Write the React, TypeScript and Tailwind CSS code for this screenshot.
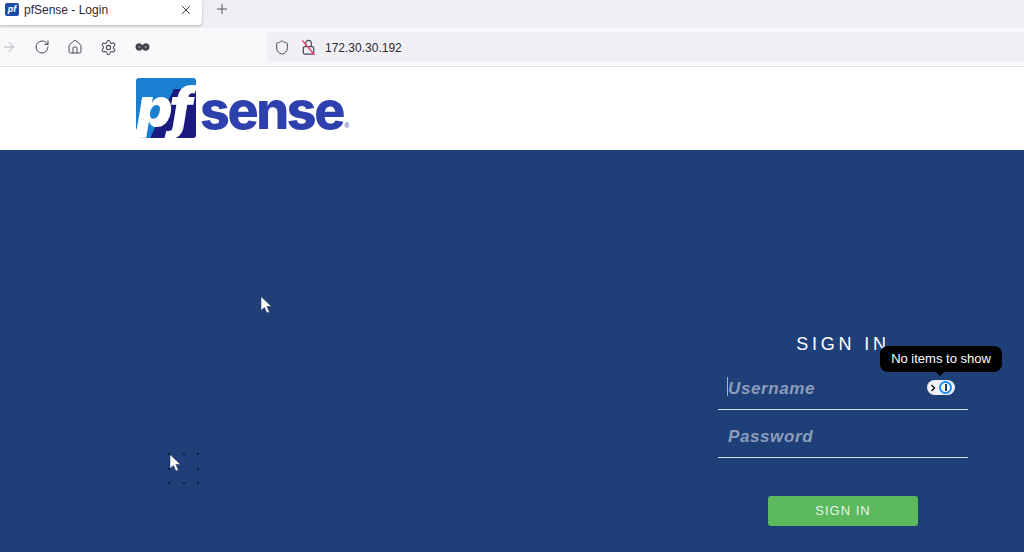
import React from 'react';
import { ArrowRight, RotateCw, Home, Settings, Shield, Plus, X } from 'lucide-react';

const ui = { fontFamily: '"Liberation Sans", sans-serif' };
const brand = { fontFamily: 'Inter, "Open Sans", sans-serif' };

const Cursor: React.FC<{ className: string }> = ({ className }) => (
  <svg viewBox="0 0 12 18" className={className}>
    <path d="M1 0.5V14.5L4.4 11.4L6.9 17L9.4 15.9L6.9 10.5H11.5Z" fill="#fff" stroke="#1a2b4d" strokeWidth="0.5" />
  </svg>
);

const BusyDots: React.FC = () => (
  <svg viewBox="0 0 34 34" className="absolute left-[167px] top-[452px] w-[34px] h-[34px]">
    {[2, 17, 31].flatMap((y) =>
      [2, 17, 31].map((x) =>
        x === 17 && y === 17 ? null : <circle key={`${x}-${y}`} cx={x} cy={y} r="1.1" fill="#0a1530" />
      )
    )}
  </svg>
);

const MaskIcon: React.FC = () => (
  <svg viewBox="0 0 16 10" className="w-[15px] h-[10px]">
    <path d="M4.5 1C6 1 7 2 8 3C9 2 10 1 11.5 1C13.8 1 15.5 2.8 15.5 5C15.5 7.2 13.8 9 11.5 9C10 9 9 8 8 7C7 8 6 9 4.5 9C2.2 9 0.5 7.2 0.5 5C0.5 2.8 2.2 1 4.5 1Z" fill="#44444f" />
    <circle cx="4.6" cy="5" r="1.2" fill="#8d8d96" />
    <circle cx="11.4" cy="5" r="1.2" fill="#8d8d96" />
  </svg>
);

const BrokenLock: React.FC = () => (
  <svg viewBox="0 0 16 18" fill="none" className="w-[15px] h-[17px]">
    <path d="M5 8V5C5 3 6.2 1.5 8 1.5C9.8 1.5 11 3 11 5V8" stroke="#4a4a55" strokeWidth="1.3" />
    <rect x="2.5" y="8" width="11" height="8" rx="1.5" stroke="#4a4a55" strokeWidth="1.3" />
    <path d="M1.5 1.5L14.5 17" stroke="#e8466e" strokeWidth="1.5" />
  </svg>
);

const Logo: React.FC = () => (
  <div className="flex items-start ml-[136px] mt-[11px] relative">
    <div className="relative w-[60px] h-[60px]">
      <svg viewBox="0 0 60 60" className="absolute inset-0 w-full h-full">
        <path d="M0 3Q0 0 3 0H57Q60 0 60 3V14H42L14 60H5L0 50Z" fill="#1a7fce" />
        <path d="M60 11V57Q60 60 57 60H14L38 11Z" fill="#1a1a80" />
      </svg>
      <span
        className="absolute left-[1px] top-[3px] text-[55px] leading-[52px] font-black italic text-white tracking-[-3px]"
        style={brand}
      >
        pf
      </span>
    </div>
    <span
      className="ml-[4px] mt-[7px] text-[52px] leading-[52px] font-extrabold text-[#2e3fae] tracking-[-2.4px]"
      style={brand}
    >
      sense
    </span>
    <span className="ml-[1px] mt-[44px] text-[7px] leading-[8px] text-[#2e3fae]" style={ui}>®</span>
  </div>
);

const Field: React.FC<{ label: string; caret?: boolean; children?: React.ReactNode }> = ({ label, caret, children }) => (
  <div className="relative h-[48px] border-b border-[#d5dbe6] flex items-center pl-[10px] pt-[7px]">
    {caret && <span className="absolute left-[9px] top-[15px] w-px h-[19px] bg-[#aab4c8]" />}
    <span className="text-[17px] font-bold italic tracking-[0.6px] text-[#8d9cbb]">{label}</span>
    {children}
  </div>
);

export default function App() {
  return (
    <div className="relative w-[1024px] h-[552px] overflow-hidden bg-white flex flex-col" style={ui}>
      {/* tab strip */}
      <div className="h-[28px] bg-[#f0f0f4] flex items-start shrink-0">
        <div className="w-[202px] h-[25px] bg-white rounded-br-[4px] shadow-[0_1px_3px_rgba(0,0,0,0.25)] flex items-center pl-[5px] pr-[9px] pb-[6px]">
          <span className="w-[14px] h-[13px] rounded-[2px] bg-[#1c4ca8] text-white text-[9px] leading-[13px] font-bold italic text-center">pf</span>
          <span className="ml-[5px] text-[12px] text-[#2b2a33] flex-1">pfSense - Login</span>
          <X className="w-[14px] h-[14px] text-[#2b2a33]" strokeWidth={1.6} />
        </div>
        <Plus className="ml-[12px] mt-[1px] w-[16px] h-[16px] text-[#5b5b66]" strokeWidth={1.5} />
      </div>

      {/* toolbar */}
      <div className="h-[39px] bg-[#f9f9fb] border-b border-[#e4e4e8] flex items-center shrink-0">
        <ArrowRight className="ml-[1px] w-[16px] h-[16px] text-[#b4b4ba]" strokeWidth={1.5} />
        <RotateCw className="ml-[17px] w-[16px] h-[16px] text-[#4a4a55]" strokeWidth={1.5} />
        <Home className="ml-[17px] w-[16px] h-[16px] text-[#4a4a55]" strokeWidth={1.5} />
        <Settings className="ml-[17px] w-[17px] h-[17px] text-[#4a4a55]" strokeWidth={1.5} />
        <span className="ml-[18px] flex"><MaskIcon /></span>
        <div className="ml-[117px] flex-1 h-[30px] bg-[#f0f0f4] rounded-l-[4px] flex items-center pl-[7px]">
          <Shield className="w-[16px] h-[17px] text-[#4a4a55]" strokeWidth={1.5} />
          <span className="ml-[11px] flex"><BrokenLock /></span>
          <span className="ml-[9px] pt-[2px] text-[12px] text-[#2b2a33]">172.30.30.192</span>
        </div>
      </div>

      {/* pfSense header */}
      <header className="h-[83px] bg-white shrink-0">
        <Logo />
      </header>

      {/* login */}
      <main className="flex-1 bg-[#1e3f77] flex justify-end pr-[56px]">
        <div className="w-[250px] pt-[183px] flex flex-col">
          <h1 className="text-center text-[18px] leading-[22px] tracking-[3.8px] text-white">SIGN IN</h1>
          <div className="mt-[7px]">
            <Field label="Username" caret>
              <span className="absolute left-[209px] top-[18px] w-[28px] h-[15px] rounded-full bg-[#eef0f4] flex items-center">
                <svg viewBox="0 0 8 10" className="ml-[3px] w-[6px] h-[8px]">
                  <path d="M2 1L6 5L2 9" fill="none" stroke="#111" strokeWidth="1.8" />
                </svg>
                <span className="ml-[3px] w-[13px] h-[13px] rounded-full border-2 border-[#1a8cff] bg-white flex items-center justify-center">
                  <span className="w-[2px] h-[7px] bg-[#1a3a66]" />
                </span>
              </span>
            </Field>
            <Field label="Password" />
          </div>
          <button className="mt-[38px] mx-auto w-[150px] h-[30px] rounded-[3px] bg-[#5cb85c] text-[#e6f5e6] text-[13px] tracking-[1px]">
            SIGN IN
          </button>
        </div>
      </main>

      {/* 1Password tooltip */}
      <div className="absolute left-[880px] top-[346px] w-[122px] h-[26px] rounded-[8px] bg-black text-white text-[13px] leading-[26px] text-center">
        No items to show
        <span className="absolute left-[55px] top-[25px] w-0 h-0 border-x-[5px] border-x-transparent border-t-[5px] border-t-black" />
      </div>

      <Cursor className="absolute left-[260px] top-[296px] w-[12px] h-[18px]" />
      <BusyDots />
      <Cursor className="absolute left-[169px] top-[454px] w-[12px] h-[18px]" />
    </div>
  );
}
